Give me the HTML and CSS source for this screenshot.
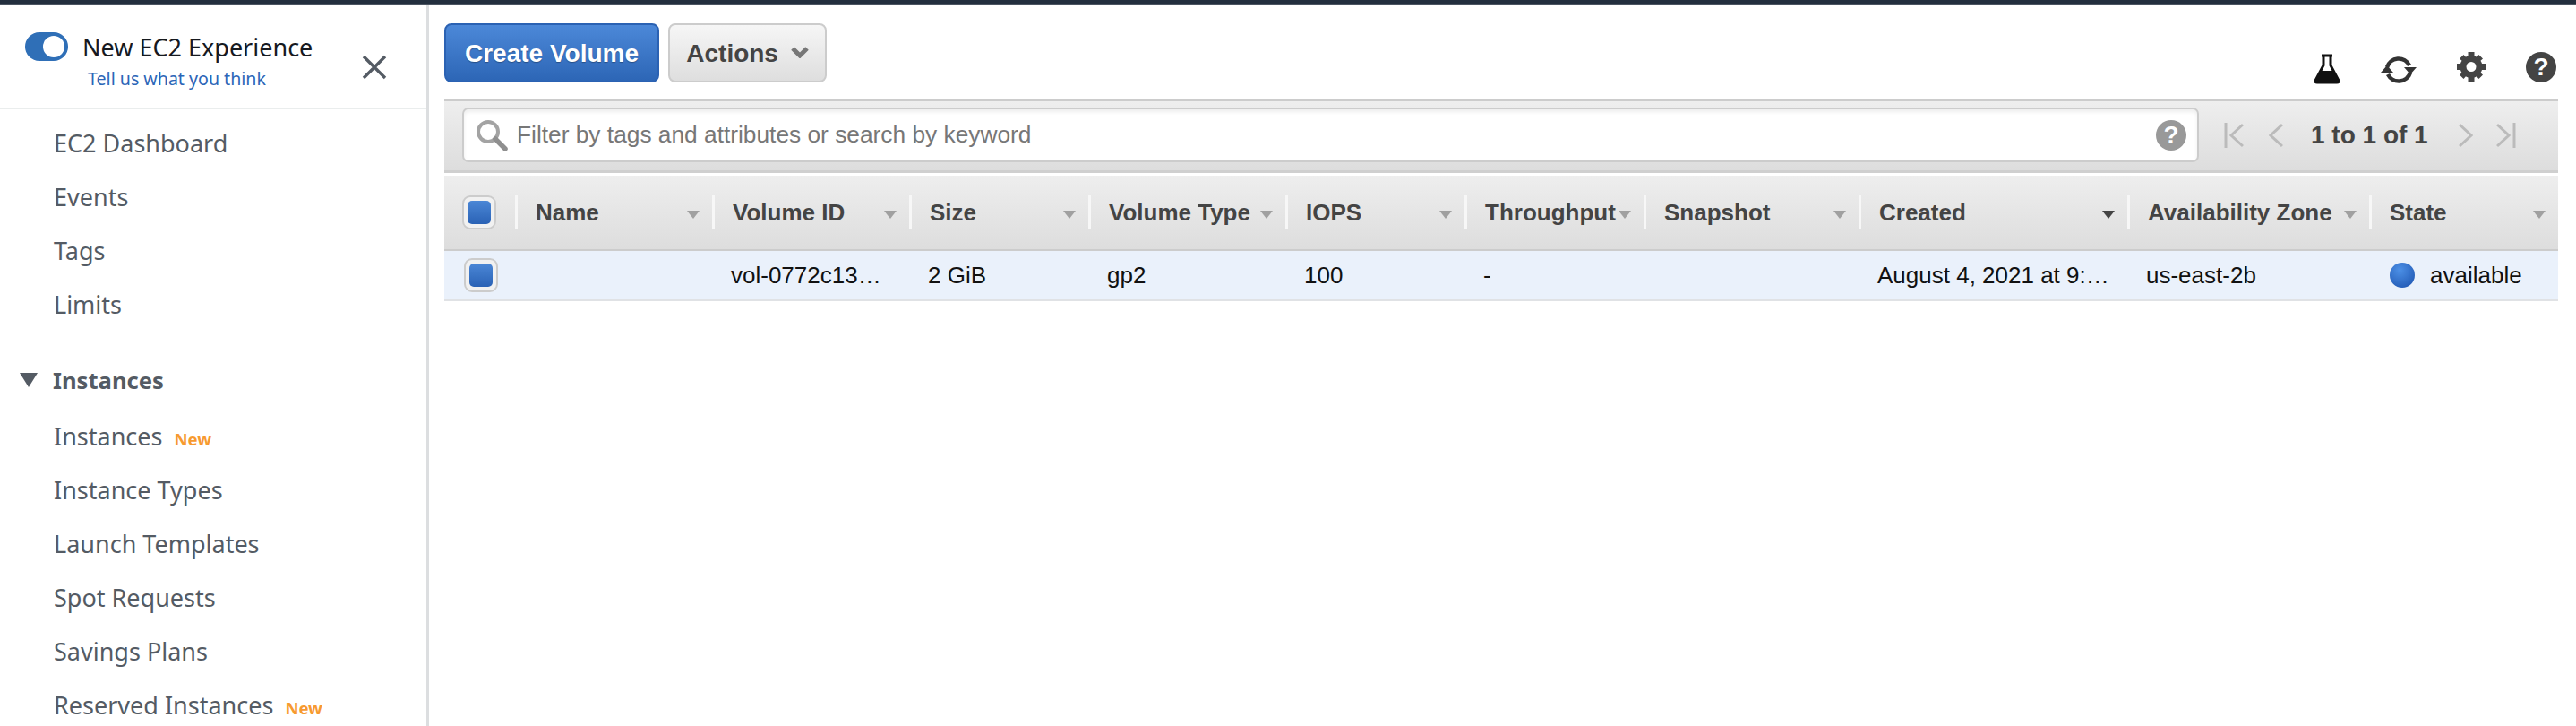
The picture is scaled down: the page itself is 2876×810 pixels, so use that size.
FILE: index.html
```html
<!DOCTYPE html>
<html lang="en">
<head>
    <meta charset="UTF-8">
    <meta name="viewport" content="width=device-width, initial-scale=1.0">
    <title>Volumes | EC2 Management Console</title>
    <link rel="stylesheet" href="styles.css">
</head>
<body>
    <div class="topbar"></div>
    <div class="layout">
        <aside class="sidebar">
            <div class="side-head">
                <div class="side-head-text">
                    <div class="exp-row">
                        <span class="toggle"><span class="toggle-knob"></span></span>
                        <span class="exp-title">New EC2 Experience</span>
                    </div>
                    <a class="exp-link" href="#">Tell us what you think</a>
                </div>
                <svg class="close-icon" width="28" height="28" viewBox="0 0 28 28">
                    <path d="M2 2 L26 26 M26 2 L2 26" stroke="#545b64" stroke-width="3.4" fill="none"/>
                </svg>
            </div>
            <nav class="side-nav">
                <a href="#">EC2 Dashboard</a>
                <a href="#">Events</a>
                <a href="#">Tags</a>
                <a href="#">Limits</a>
                <div class="side-section">
                    <svg width="20" height="16" viewBox="0 0 20 16"><path d="M0 0 H20 L10 16 Z" fill="#545b64"/></svg>
                    <span>Instances</span>
                </div>
                <div class="side-sub">
                    <a href="#">Instances <span class="new-tag">New</span></a>
                    <a href="#">Instance Types</a>
                    <a href="#">Launch Templates</a>
                    <a href="#">Spot Requests</a>
                    <a href="#">Savings Plans</a>
                    <a href="#">Reserved Instances <span class="new-tag">New</span></a>
                </div>
            </nav>
        </aside>

        <main class="main">
            <div class="toolbar">
                <button class="btn btn-primary">Create Volume</button>
                <button class="btn btn-default">Actions
                    <svg width="20" height="13" viewBox="0 0 20 13"><path d="M2 2 L10 10 L18 2" stroke="#777" stroke-width="5" fill="none"/></svg>
                </button>
                <div class="tool-icons">
                    <svg class="icon-flask" width="32" height="34" viewBox="0 0 32 34">
                        <path d="M10 2 H22 M12 2 V13 L3 30 Q2 32 5 32 H27 Q30 32 29 30 L20 13 V2" stroke="#111" stroke-width="3" fill="none"/>
                        <path d="M9 19 H23 L29 32 H3 Z" fill="#111"/>
                    </svg>
                    <svg class="icon-refresh" width="42" height="32" viewBox="0 0 42 32">
                        <path d="M8 13 A13.500 13.500 0 0 1 33 11" stroke="#333" stroke-width="4.500" fill="none"/>
                        <path d="M34 19 A13.500 13.500 0 0 1 9 21" stroke="#333" stroke-width="4.500" fill="none"/>
                        <path d="M27 13 H41 L34 21 Z" fill="#333"/>
                        <path d="M1 19 H15 L8 11 Z" fill="#333"/>
                    </svg>
                    <svg class="icon-gear" width="32" height="33" viewBox="0 0 32 33">
                        <circle cx="16" cy="16.500" r="9" fill="none" stroke="#444" stroke-width="7"/>
                        <path d="M12.500 0 H19.500 V6 H12.500 Z M12.500 27 H19.500 V33 H12.500 Z M0 13 H6 V20 H0 Z M26 13 H32 V20 H26 Z" fill="#444"/>
                        <path d="M3 7.500 L7.500 3 L11 7 L7 11 Z M29 7.500 L24.500 3 L21 7 L25 11 Z M3 25.500 L7.500 30 L11 26 L7 22 Z M29 25.500 L24.500 30 L21 26 L25 22 Z" fill="#444"/>
                    </svg>
                    <span class="help-dot help-dark">?</span>
                </div>
            </div>

            <div class="filter-bar">
                <div class="search">
                    <svg width="36" height="36" viewBox="0 0 36 36">
                        <circle cx="14" cy="14" r="11" fill="#fff" stroke="#a3a3a3" stroke-width="4"/>
                        <path d="M22 22 L33 33" stroke="#8f8f8f" stroke-width="5.500" stroke-linecap="round"/>
                    </svg>
                    <span class="search-text">Filter by tags and attributes or search by keyword</span>
                    <span class="help-dot help-grey">?</span>
                </div>
                <div class="pager">
                    <svg width="22" height="28" viewBox="0 0 22 28"><path d="M2 0 V28 M21 2 L8 14 L21 26" stroke="#bbb" stroke-width="3" fill="none"/></svg>
                    <svg class="pager-prev" width="16" height="28" viewBox="0 0 16 28"><path d="M15 2 L2 14 L15 26" stroke="#bbb" stroke-width="3" fill="none"/></svg>
                    <span class="pager-text">1 to 1 of 1</span>
                    <svg class="pager-next" width="16" height="28" viewBox="0 0 16 28"><path d="M1 2 L14 14 L1 26" stroke="#bbb" stroke-width="3" fill="none"/></svg>
                    <svg class="pager-last" width="22" height="28" viewBox="0 0 22 28"><path d="M20 0 V28 M1 2 L14 14 L1 26" stroke="#bbb" stroke-width="3" fill="none"/></svg>
                </div>
            </div>

            <div class="table">
                <div class="row head-row">
                    <div class="th-check"><span class="check"><span class="check-fill"></span></span></div>
                    <div class="th">Name<i class="sort"></i></div>
                    <div class="th">Volume ID<i class="sort"></i></div>
                    <div class="th">Size<i class="sort"></i></div>
                    <div class="th">Volume Type<i class="sort"></i></div>
                    <div class="th">IOPS<i class="sort"></i></div>
                    <div class="th">Throughput<i class="sort"></i></div>
                    <div class="th">Snapshot<i class="sort"></i></div>
                    <div class="th">Created<i class="sort sort-active"></i></div>
                    <div class="th">Availability Zone<i class="sort"></i></div>
                    <div class="th">State<i class="sort"></i></div>
                </div>
                <div class="row body-row">
                    <div class="td-check"><span class="check"><span class="check-fill"></span></span></div>
                    <div class="td"></div>
                    <div class="td">vol-0772c13…</div>
                    <div class="td">2 GiB</div>
                    <div class="td">gp2</div>
                    <div class="td">100</div>
                    <div class="td">-</div>
                    <div class="td"></div>
                    <div class="td">August 4, 2021 at 9:…</div>
                    <div class="td">us-east-2b</div>
                    <div class="td"><span class="state-dot"></span>available</div>
                </div>
            </div>
        </main>
    </div>
</body>
</html>
```

FILE: styles.css
```css
* {
    box-sizing: border-box;
}
body {
    margin: 0;
    height: 810px;
    overflow: hidden;
    background: #fff;
    font-family: "Liberation Sans", Arial, sans-serif;
}
.topbar {
    height: 6px;
    background: #232f3e;
    border-bottom: 2px solid #4c5562;
}
.layout {
    display: flex;
    height: 804px;
}

/* left nav */
.sidebar {
    width: 479px;
    flex-shrink: 0;
    border-right: 3px solid #dcdee0;
    font-family: "Noto Sans", sans-serif;
    overflow: hidden;
}
.side-head {
    height: 116px;
    border-bottom: 2px solid #eaeded;
    display: flex;
    padding: 30px 0 0 28px;
}
.side-head-text {
    width: 376px;
}
.exp-row {
    display: flex;
    align-items: center;
    height: 32px;
}
.toggle {
    width: 48px;
    height: 32px;
    border-radius: 16px;
    background: #2f6fb7;
    display: flex;
    align-items: center;
    justify-content: flex-end;
    padding-right: 4px;
}
.toggle-knob {
    width: 24px;
    height: 24px;
    border-radius: 50%;
    background: #fff;
}
.exp-title {
    margin-left: 16px;
    font-size: 27px;
    color: #16191f;
    white-space: nowrap;
}
.exp-link {
    display: block;
    margin: 6px 0 0 70px;
    font-size: 19.6px;
    line-height: 28px;
    color: #2c66b8;
    text-decoration: none;
}
.close-icon {
    margin-top: 25px;
}
.side-nav {
    padding-top: 8px;
}
.side-nav a {
    display: block;
    height: 60px;
    line-height: 60px;
    padding-left: 60px;
    font-size: 27px;
    color: #545b64;
    text-decoration: none;
    white-space: nowrap;
}
.side-section {
    margin-top: 24px;
    height: 60px;
    display: flex;
    align-items: center;
    padding-left: 22px;
    font-size: 25.6px;
    font-weight: 700;
    color: #545b64;
}
.side-section span {
    margin-left: 17px;
}
.side-sub {
    margin-top: 3px;
}
.new-tag {
    margin-left: 6px;
    font-size: 18.5px;
    font-weight: 700;
    color: #f79a2f;
}

/* main area */
.main {
    flex: 1;
    padding: 0 20px 0 17px;
    min-width: 0;
}
.toolbar {
    height: 104px;
    padding-top: 20px;
    display: flex;
    align-items: flex-start;
}
.btn {
    height: 66px;
    border-radius: 8px;
    font-family: inherit;
    font-size: 28px;
    font-weight: 700;
    padding: 2px 0 0;
}
.btn-primary {
    width: 240px;
    color: #fff;
    background: linear-gradient(#4c88d8, #2d66b6);
    border: 2px solid #2b62b3;
    text-shadow: 0 1px 1px rgba(0, 0, 0, 0.3);
}
.btn-default {
    width: 177px;
    margin-left: 10px;
    color: #444;
    background: linear-gradient(#f6f6f6, #dedede);
    border: 2px solid #ccc;
}
.btn-default svg {
    margin-left: 6px;
    vertical-align: 4px;
}
.tool-icons {
    margin-left: auto;
    display: flex;
    align-items: flex-start;
    padding: 32px 2px 0 0;
}
.icon-flask {
    margin-top: 2px;
}
.icon-refresh {
    margin: 4px 0 0 43px;
}
.icon-gear {
    margin-left: 44px;
}
.help-dot {
    display: block;
    border-radius: 50%;
    color: #fff;
    font-weight: 700;
    text-align: center;
}
.help-dark {
    width: 34px;
    height: 34px;
    line-height: 34px;
    font-size: 28px;
    margin-left: 45px;
    background: #444;
}
.help-grey {
    width: 34px;
    height: 34px;
    line-height: 34px;
    font-size: 28px;
    margin-left: auto;
    background: #999;
}

/* filter bar */
.filter-bar {
    height: 83px;
    display: flex;
    align-items: flex-start;
    padding: 7px 0 0 20px;
    background: linear-gradient(#eeeeee, #dddddd);
    border-top: 3px solid #cccccc;
    border-bottom: 3px solid #cfcfcf;
}
.search {
    width: 1939px;
    height: 61px;
    display: flex;
    align-items: center;
    padding: 0 12px 0 13px;
    background: #fff;
    border: 2px solid #ccc;
    border-radius: 7px;
    box-shadow: inset 0 3px 4px #eee;
}
.search-text {
    margin-left: 10px;
    font-size: 26.3px;
    color: #777;
}
.pager {
    display: flex;
    align-items: center;
    height: 61px;
    padding-left: 28px;
    font-size: 28px;
    font-weight: 700;
    color: #444;
}
.pager-prev {
    margin-left: 28px;
}
.pager-text {
    margin-left: 31px;
    white-space: nowrap;
}
.pager-next {
    margin-left: 34px;
}
.pager-last {
    margin-left: 26px;
}

/* table */
.table {
    margin-top: 3px;
}
.row {
    display: grid;
    grid-template-columns: 79px 220px 220px 200px 220px 200px 200px 240px 300px 270px 211px;
}
.head-row {
    height: 84px;
    align-items: center;
    background: linear-gradient(#eeeeee, #dddddd);
    border-bottom: 2px solid #cccccc;
}
.th-check {
    padding-left: 20px;
    display: flex;
}
.th {
    height: 38px;
    display: flex;
    align-items: center;
    justify-content: space-between;
    padding: 0 14px 0 20px;
    border-left: 3px solid #f7f7f7;
    font-size: 26px;
    font-weight: 700;
    color: #444;
    white-space: nowrap;
}
.sort {
    width: 0;
    height: 0;
    border-left: 7px solid transparent;
    border-right: 7px solid transparent;
    border-top: 9px solid #a0a0a0;
    margin-top: 4px;
}
.sort-active {
    border-top-color: #444;
}
.body-row {
    height: 56px;
    align-items: center;
    background: #eaf1fb;
    border-bottom: 2px solid #e0e2e5;
}
.td-check {
    padding-left: 22px;
    display: flex;
}
.td {
    padding-left: 21px;
    font-size: 26px;
    color: #111;
    white-space: nowrap;
    display: flex;
    align-items: center;
}
.check {
    width: 38px;
    height: 38px;
    display: flex;
    align-items: center;
    justify-content: center;
    background: #f1f1f1;
    border: 2px solid #cccccc;
    border-radius: 9px;
}
.check-fill {
    width: 26px;
    height: 26px;
    border-radius: 5px;
    background: linear-gradient(#4b87d6, #2a62b5);
}
.state-dot {
    width: 28px;
    height: 28px;
    margin: 0 17px 0 2px;
    border-radius: 50%;
    background: radial-gradient(circle at 40% 30%, #4c90e6, #1a50ac);
}
```
